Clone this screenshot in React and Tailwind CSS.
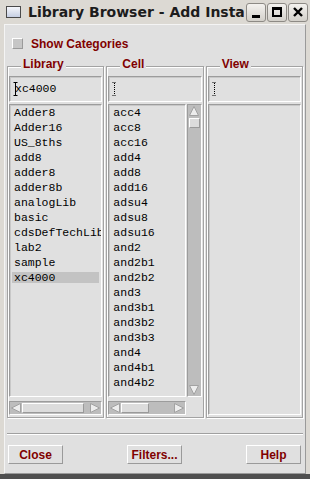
import React from "react";

const libraries = ["Adder8", "Adder16", "US_8ths", "add8", "adder8", "adder8b", "analogLib", "basic", "cdsDefTechLib", "lab2", "sample", "xc4000"];

const cells = ["acc4", "acc8", "acc16", "add4", "add8", "add16", "adsu4", "adsu8", "adsu16", "and2", "and2b1", "and2b2", "and3", "and3b1", "and3b2", "and3b3", "and4", "and4b1", "and4b2"];

const sunken = "border border-t-[#9c9c9c] border-l-[#9c9c9c] border-b-white border-r-white";
const raised = "border border-t-white border-l-white border-b-[#9a9a9a] border-r-[#9a9a9a]";

function Arrow({ dir }) {
  const pts = {
    left: "10.5,1.5 10.5,10.5 1.5,6",
    right: "1.5,1.5 1.5,10.5 10.5,6",
    up: "1.5,10.5 10.5,10.5 6,1.5",
    down: "1.5,1.5 10.5,1.5 6,10.5",
  }[dir];
  return (
    <svg width="12" height="12" viewBox="0 0 12 12" className="shrink-0">
      <polygon points={pts} fill="#ededed" stroke="#a2a2a2" strokeWidth="1" />
    </svg>
  );
}

function Cursor({ solid }) {
  return (
    <svg width="5" height="14" viewBox="0 0 5 14" className="shrink-0">
      <line x1="2.5" y1="1" x2="2.5" y2="13" stroke="#000" strokeDasharray={solid ? undefined : "1 1"} />
      <line x1="0.5" y1="0.5" x2="4.5" y2="0.5" stroke="#000" strokeDasharray={solid ? undefined : "1 1"} />
      <line x1="0.5" y1="13.5" x2="4.5" y2="13.5" stroke="#000" strokeDasharray={solid ? undefined : "1 1"} />
    </svg>
  );
}

function Field({ value, solid }) {
  return (
    <div className={"h-[26px] shrink-0 flex items-center pl-[3px] shadow-[inset_1px_1px_0_#c8c8c8] font-['Liberation_Mono',monospace] text-[11.5px] text-black " + sunken}>
      <Cursor solid={solid} />
      {value && <span className="-ml-[3px]">{value}</span>}
    </div>
  );
}

function ListBox({ items = [], selected }) {
  return (
    <div className={"flex-1 min-h-0 overflow-hidden px-[2px] shadow-[inset_1px_1px_0_#c8c8c8] font-['Liberation_Mono',monospace] text-[11.5px] text-black " + sunken}>
      {items.map((it) => (
        <div key={it} className="h-[15px] py-[2px]">
          <div className={"h-[11px] leading-[11px] pl-[2px] whitespace-nowrap " + (it === selected ? "bg-[#c3c3c3]" : "")}>{it}</div>
        </div>
      ))}
    </div>
  );
}

function HScroll({ thumb }) {
  return (
    <div className={"h-[14px] shrink-0 flex items-center bg-[#bdbdbd] " + sunken}>
      <Arrow dir="left" />
      <div className="flex-1 h-full py-px">
        <div className={"h-full bg-[#dcdcdc] " + raised + " " + thumb} />
      </div>
      <Arrow dir="right" />
    </div>
  );
}

function VScroll() {
  return (
    <div className={"w-[15px] shrink-0 flex flex-col items-center bg-[#bdbdbd] " + sunken}>
      <Arrow dir="up" />
      <div className="w-full px-px mt-px">
        <div className={"h-[10px] bg-[#dcdcdc] " + raised} />
      </div>
      <div className="flex-1" />
      <Arrow dir="down" />
    </div>
  );
}

function Group({ label, children }) {
  return (
    <fieldset className="min-w-0 border border-[#a3a3a3] shadow-[inset_1px_1px_0_#fff,1px_1px_0_#fff] px-px pb-[2px]">
      <legend className="ml-[12px] px-[2px] pb-[4px] bg-[#e0e0e0] text-[12px] leading-[14px] font-bold text-[#800000]">{label}</legend>
      <div className="h-[340px] pt-px flex flex-col">{children}</div>
    </fieldset>
  );
}

function TitleButton({ children }) {
  return (
    <div className="w-[20px] h-[19px] rounded-[3px] border border-[#8d8a85] bg-linear-to-b from-[#f4f2ef] to-[#d3d0ca] flex items-center justify-center">
      {children}
    </div>
  );
}

function Btn({ children }) {
  return (
    <div className={"w-[55px] h-[19px] flex items-center justify-center text-[12px] font-bold text-[#800000] " + raised}>
      {children}
    </div>
  );
}

export default function App() {
  return (
    <div className="w-[310px] h-[479px] flex flex-col bg-[#dcd9d3] overflow-hidden font-['Liberation_Sans',Arial,sans-serif]">
      {/* title bar */}
      <div className="h-[24px] shrink-0 flex items-center pl-[6px] pr-[2px]">
        <div className="w-[15px] h-[12px] shrink-0 border border-[#4a4a4a] bg-linear-to-b from-[#f6f7fb] to-[#c6cfe3]" />
        <div className="ml-[7px] flex-1 min-w-0 overflow-hidden whitespace-nowrap font-['DejaVu_Sans',sans-serif] font-bold text-[14px] text-[#1c1c1c]">
          Library Browser - Add Instance
        </div>
        <div className="ml-[2px] flex gap-px shrink-0">
          <TitleButton>
            <div className="w-[8px] h-[3px] mt-[8px] bg-black" />
          </TitleButton>
          <TitleButton>
            <div className="w-[10px] h-[10px] border-2 border-t-[3px] border-black" />
          </TitleButton>
          <TitleButton>
            <svg width="10" height="10" viewBox="0 0 10 10">
              <path d="M1 1 L9 9 M9 1 L1 9" stroke="#000" strokeWidth="2.4" />
            </svg>
          </TitleButton>
        </div>
      </div>

      {/* window body */}
      <div className="flex-1 flex flex-col px-[4px]">
        <div className="flex-1 flex flex-col bg-[#e0e0e0] border border-t-[#f4f4f4] border-l-[#f4f4f4] border-r-[#9a9a9a] border-b-[#9a9a9a] px-[2px]">
          <div className="mt-[12px] h-[13px] flex items-center pl-[5px]">
            <div className={"w-[11px] h-[11px] bg-[#c6c6c6] " + raised} />
            <span className="ml-[8px] text-[12px] font-bold text-[#800000]">Show Categories</span>
          </div>

          <div className="mt-[7px] grid grid-cols-3 gap-[2px]">
            <Group label="Library">
              <Field value="xc4000" solid />
              <div className="mt-[2px] flex-1 min-h-0 flex">
                <ListBox items={libraries} selected="xc4000" />
              </div>
              <div className="mt-[4px]">
                <HScroll thumb="w-[62px]" />
              </div>
            </Group>

            <Group label="Cell">
              <Field />
              <div className="mt-[2px] flex-1 min-h-0 flex gap-px">
                <ListBox items={cells} />
                <VScroll />
              </div>
              <div className="mt-[4px] flex gap-px">
                <div className="flex-1">
                  <HScroll thumb="w-[28px]" />
                </div>
                <div className="w-[15px]" />
              </div>
            </Group>

            <Group label="View">
              <Field />
              <div className="mt-[2px] flex-1 min-h-0 flex">
                <ListBox />
              </div>
            </Group>
          </div>

          <div className="mt-[15px] h-[2px] border-t border-t-[#a0a0a0] border-b border-b-white" />

          <div className="mt-[10px] flex justify-between pl-px pr-[2px]">
            <Btn>Close</Btn>
            <Btn>Filters...</Btn>
            <Btn>Help</Btn>
          </div>
        </div>
      </div>
      <div className="h-[5px] shrink-0 bg-[#4f4f4f]" />
    </div>
  );
}
